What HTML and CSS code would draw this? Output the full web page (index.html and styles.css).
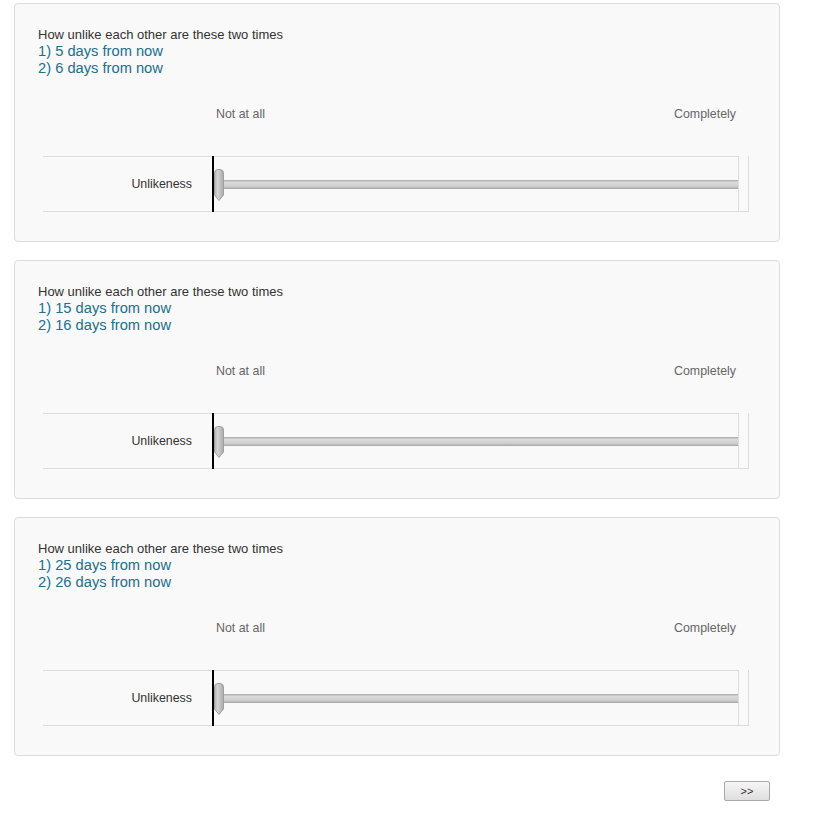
FILE: index.html
```html
<!DOCTYPE html>
<html>
<head>
<meta charset="utf-8">
<link rel="stylesheet" href="styles.css">
</head>
<body>
<div class="page">
  <div class="card">
    <div class="question">How unlike each other are these two times</div>
    <div class="options">
      <div class="option">1) 5 days from now</div>
      <div class="option">2) 6 days from now</div>
    </div>
    <div class="scale"><span>Not at all</span><span>Completely</span></div>
    <div class="matrix">
      <div class="label">Unlikeness</div>
      <div class="zero"></div>
      <div class="track-cell">
        <div class="track"></div>
        <svg class="handle" width="10" height="32" viewBox="0 0 10 32">
          <defs><linearGradient id="hg1" x1="0" x2="1" y1="0" y2="0"><stop offset="0" stop-color="#b4b4b4"/><stop offset="0.35" stop-color="#d4d4d4"/><stop offset="1" stop-color="#a8a8a8"/></linearGradient></defs>
          <path d="M0.5 4 Q0.5 0.5 4 0.5 H6 Q9.5 0.5 9.5 4 V26 L5 31.5 L0.5 26 Z" fill="url(#hg1)" stroke="#a0a0a0" stroke-width="1"/>
        </svg>
      </div>
      <div class="spacer"></div>
    </div>
  </div>

  <div class="card">
    <div class="question">How unlike each other are these two times</div>
    <div class="options">
      <div class="option">1) 15 days from now</div>
      <div class="option">2) 16 days from now</div>
    </div>
    <div class="scale"><span>Not at all</span><span>Completely</span></div>
    <div class="matrix">
      <div class="label">Unlikeness</div>
      <div class="zero"></div>
      <div class="track-cell">
        <div class="track"></div>
        <svg class="handle" width="10" height="32" viewBox="0 0 10 32">
          <defs><linearGradient id="hg2" x1="0" x2="1" y1="0" y2="0"><stop offset="0" stop-color="#b4b4b4"/><stop offset="0.35" stop-color="#d4d4d4"/><stop offset="1" stop-color="#a8a8a8"/></linearGradient></defs>
          <path d="M0.5 4 Q0.5 0.5 4 0.5 H6 Q9.5 0.5 9.5 4 V26 L5 31.5 L0.5 26 Z" fill="url(#hg2)" stroke="#a0a0a0" stroke-width="1"/>
        </svg>
      </div>
      <div class="spacer"></div>
    </div>
  </div>

  <div class="card">
    <div class="question">How unlike each other are these two times</div>
    <div class="options">
      <div class="option">1) 25 days from now</div>
      <div class="option">2) 26 days from now</div>
    </div>
    <div class="scale"><span>Not at all</span><span>Completely</span></div>
    <div class="matrix">
      <div class="label">Unlikeness</div>
      <div class="zero"></div>
      <div class="track-cell">
        <div class="track"></div>
        <svg class="handle" width="10" height="32" viewBox="0 0 10 32">
          <defs><linearGradient id="hg3" x1="0" x2="1" y1="0" y2="0"><stop offset="0" stop-color="#b4b4b4"/><stop offset="0.35" stop-color="#d4d4d4"/><stop offset="1" stop-color="#a8a8a8"/></linearGradient></defs>
          <path d="M0.5 4 Q0.5 0.5 4 0.5 H6 Q9.5 0.5 9.5 4 V26 L5 31.5 L0.5 26 Z" fill="url(#hg3)" stroke="#a0a0a0" stroke-width="1"/>
        </svg>
      </div>
      <div class="spacer"></div>
    </div>
  </div>

  <div class="buttons">
    <button class="next">&gt;&gt;</button>
  </div>
</div>
</body>
</html>
```

FILE: styles.css
```css
html, body {
  margin: 0;
  padding: 0;
  background: #ffffff;
}

body {
  font-family: "Liberation Sans", Arial, sans-serif;
  color: #333333;
}

.page {
  padding: 3px 0 0 14px;
  width: 766px;
  display: flex;
  flex-direction: column;
  gap: 18px;
}

.card {
  box-sizing: border-box;
  width: 766px;
  background: #f9f9f9;
  border: 1px solid #dcdcdc;
  border-radius: 4px;
  padding: 23px 23px 29px 23px;
}

.question {
  font-size: 13px;
  line-height: 16px;
  color: #333333;
}

.option {
  font-size: 14.7px;
  line-height: 17px;
  color: #21708f;
}

.scale {
  display: flex;
  justify-content: space-between;
  margin: 30px 0 0 178px;
  width: 520px;
  font-size: 12.4px;
  line-height: 14px;
  color: #666666;
}

.matrix {
  display: flex;
  margin: 35px 0 0 5px;
  width: 706px;
  box-sizing: border-box;
  border-bottom: 1px solid #dcdcdc;
  border-right: 1px solid #dcdcdc;
}

.label {
  width: 169px;
  box-sizing: border-box;
  border-top: 1px solid #dcdcdc;
  height: 55px;
  padding-right: 20px;
  display: flex;
  align-items: center;
  justify-content: flex-end;
  font-size: 12.4px;
  color: #333333;
}

.zero {
  width: 2px;
  background: #000000;
  margin-bottom: -1px;
  position: relative;
}

.track-cell {
  position: relative;
  width: 525px;
  box-sizing: border-box;
  border-top: 1px solid #dcdcdc;
  border-right: 1px solid #dcdcdc;
  display: flex;
  align-items: center;
}

.track {
  width: 100%;
  height: 9px;
  background: linear-gradient(#b3b3b3 0, #b3b3b3 11%, #dcdcdc 22%, #cfcfcf 70%, #bcbcbc 85%, #a3a3a3 100%);
}

.handle {
  position: absolute;
  left: 0;
  top: 12px;
}

.spacer {
  width: 9px;
}

.buttons {
  display: flex;
  justify-content: flex-end;
  padding: 7px 10px 0 0;
}

.next {
  width: 46px;
  height: 20px;
  box-sizing: border-box;
  border: 1px solid #a9a9a9;
  border-radius: 2px;
  background: linear-gradient(#f6f6f6, #dedede);
  font-family: "Liberation Sans", Arial, sans-serif;
  font-size: 11px;
  color: #333333;
  padding: 0;
}
```
